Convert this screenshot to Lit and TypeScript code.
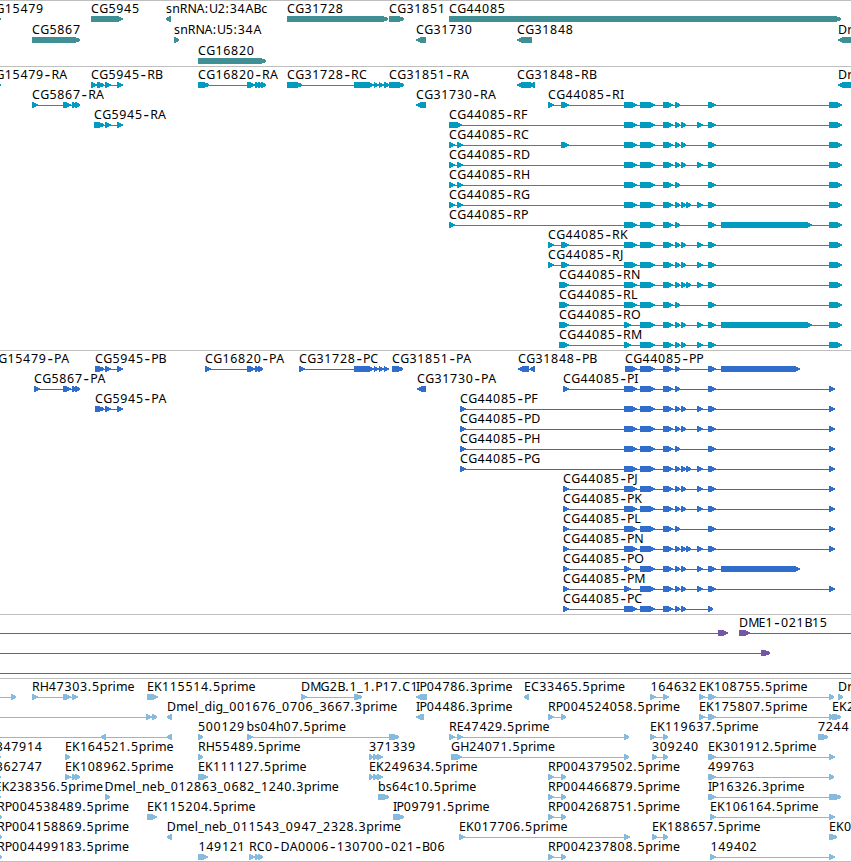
import { LitElement, html, svg, css } from "lit";
import { customElement, property } from "lit/decorators.js";

type Span = [number, number];
interface Feature {
  row: number;
  name: string;
  at: number;
  parts: Span[];
  dir?: 1 | -1;
}

const f = (row: number, name: string, at: number, parts: Span[] = [], dir: 1 | -1 = 1): Feature => ({ row, name, at, parts, dir });

/* Pen advance of each character, in pixels. */
const ADV: Record<string, number> = {
  A: 8.2, B: 7.6, C: 8.3, D: 9.2, E: 7, F: 6.8, G: 9.2, H: 9, I: 3.6, J: 3.6, K: 8, L: 6.8, M: 10.4, N: 9, O: 9.4,
  P: 7.2, R: 7.8, U: 8.8, "-": 7.6, "_": 6.1, ".": 4.2, ":": 4.2, a: 7.3, b: 7.7, c: 6.5, d: 7.7, e: 7.2, g: 7.5,
  h: 7.6, i: 3.4, l: 3.4, m: 11.6, n: 7.6, p: 7.7, r: 5, s: 6.2,
};
const adv = (c: string) => ADV[c] ?? 7.8;

/* Exons of CG44085, keyed by one letter each. */
const EXONS: Record<string, Span[]> = {
  a: [[624, 636.5]],
  A: [[624, 630.5]],
  p: [[625, 636.5]],
  b: [[640, 654.7]],
  c: [[663, 672.5]],
  d: [[675, 680.4]],
  e: [[681, 686.4]],
  f: [[686, 691.4]],
  g: [[697, 702.6]],
  h: [[708, 712.5], [710, 715.6]],
  H: [[708, 713.4]],
  X: [[721, 811.5]],
  Y: [[721, 800]],
  Z: [[829, 841.5]],
  z: [[829, 834.5]],
  "1": [[449, 454.5]],
  "2": [[457, 462.5]],
  "3": [[449, 461.5]],
  "4": [[548, 553.5]],
  "5": [[561, 568.5]],
  "6": [[559, 568.5]],
  "7": [[563, 568.5]],
  "8": [[460, 465.5]],
};
const iso = (row: number, suffix: string, keys: string): Feature => {
  const parts = [...keys].flatMap((k) => EXONS[k]);
  return f(row, "CG44085-" + suffix, parts[0][0], parts);
};

const GENES: Feature[] = [
  f(0, "CG15479", -12.7, [[-8, 1]]),
  f(0, "CG5945", 91, [[91, 122.5]]),
  f(0, "snRNA:U2:34ABc", 166, [[166, 171.2]], -1),
  f(0, "CG31728", 287, [[287, 388.3]]),
  f(0, "CG31851", 389, [[389, 404.3]]),
  f(0, "CG44085", 449, [[449, 841.3]]),
  f(1, "CG5867", 32, [[32, 80.3]]),
  f(1, "snRNA:U5:34A", 174, [[174, 179.3]]),
  f(1, "CG31730", 416, [[416, 426]], -1),
  f(1, "CG31848", 517, [[517, 532]], -1),
  f(1, "Dr", 838, [[838, 870]], -1),
  f(2, "CG16820", 198, [[198, 266.3]]),
];

const TRANSCRIPTS: Feature[] = [
  f(0, "CG15479-RA", -12.7, [[-8, 1]]),
  f(0, "CG5945-RB", 91, [[91, 96.5], [97, 104.3], [105, 110.5], [117, 123]]),
  f(0, "CG16820-RA", 198, [[198, 209.4], [247, 255], [255, 259.5], [258, 263], [261, 266.2]]),
  f(0, "CG31728-RC", 287, [[287, 302.4], [354, 374], [373.5, 379], [378.5, 384], [384, 389.3]]),
  f(0, "CG31851-RA", 389, [[389, 404.3]]),
  f(0, "CG31848-RB", 517, [[517, 530.5], [530, 535]], -1),
  f(0, "Dr", 838, [[838, 870]], -1),
  f(1, "CG5867-RA", 32, [[32, 37.5], [63, 70.5], [72, 76.5], [75, 80.4]]),
  f(1, "CG31730-RA", 416, [[416, 426]], -1),
  iso(1, "RI", "45abcdhZ"),
  f(2, "CG5945-RA", 94, [[94, 99], [96, 104.3], [105, 110.8], [117, 122.6]]),
  iso(2, "RF", "3abcdeghZ"),
  iso(3, "RC", "125abcdehZ"),
  iso(4, "RD", "12abcdeghZ"),
  iso(5, "RH", "12abcdhZ"),
  iso(6, "RG", "12abcdefghZ"),
  iso(7, "RP", "1abcdhXZ"),
  iso(8, "RK", "45abcdeghZ"),
  iso(9, "RJ", "45abcdeghZ"),
  iso(10, "RN", "6abcdefghZ"),
  iso(11, "RL", "6abcdhZ"),
  iso(12, "RO", "6AbcdeghXZ"),
  iso(13, "RM", "6AbcdeghZ"),
];

const PROTEINS: Feature[] = [
  f(0, "CG15479-PA", -10, []),
  f(0, "CG5945-PB", 95, [[95, 100], [97, 104.3], [105, 110.6], [117, 122.6]]),
  f(0, "CG16820-PA", 205, [[205, 210.8], [247, 255], [255, 259.5], [258, 263.3]]),
  f(0, "CG31728-PC", 299, [[299, 304.5], [354, 374], [373.5, 378.5], [378.5, 384], [383.5, 389]]),
  f(0, "CG31851-PA", 392, [[392, 403.3]]),
  f(0, "CG31848-PB", 518, [[518, 529.3], [530, 535]], -1),
  iso(0, "PP", "pbcdhY"),
  f(1, "CG5867-PA", 34, [[34, 39.5], [63, 70.5], [72, 76.5], [75, 80.4]]),
  f(1, "CG31730-PA", 417, [[417, 426]], -1),
  iso(1, "PI", "7abcdhz"),
  f(2, "CG5945-PA", 95, [[95, 100], [97, 104.3], [105, 110.6], [117, 122.6]]),
  iso(2, "PF", "8abcdeghz"),
  iso(3, "PD", "8abcdeghz"),
  iso(4, "PH", "8abcdhz"),
  iso(5, "PG", "8abcdefghz"),
  iso(6, "PJ", "7abcdeghz"),
  iso(7, "PK", "7abcdeghz"),
  iso(8, "PL", "7abcdhz"),
  iso(9, "PN", "7abcdefghz"),
  iso(10, "PO", "7AbcdeghY"),
  iso(11, "PM", "7Abcdeghz"),
  iso(12, "PC", "7abcdeH"),
];

const CLONES: Feature[] = [
  f(0, "", 0, [[-20, -10], [718, 727.6]]),
  f(0, "DME1-021B15", 739, [[739, 749.6], [870, 880]]),
  f(1, "", 0, [[-20, -10], [761, 770.4]]),
  f(2, "", 0, [[-20, -10], [870, 880]]),
];

const PAIR: Span[] = [[708, 712.5], [710, 715.8]];
const TRIO: Span[] = [[369, 373.5], [373, 378], [377, 383]];
const RP: Span[] = [[548, 553.5], [561, 566]];
const ESTS: Feature[] = [
  f(0, "", 0, [[-20, -10], [11, 16.3]]),
  f(0, "RH47303.5prime", 32, [[32, 37.5], [63, 71], [72, 77.5]]),
  f(0, "EK115514.5prime", 147, [[147, 157.5]]),
  f(0, "DMG2B.1_1.P17.C1", 301, [[301, 306.5], [354, 362.4]]),
  f(0, "IP04786.3prime", 416, [[416, 427]], -1),
  f(0, "EC33465.5prime", 524, [[524, 529]], -1),
  f(0, "164632", 650.5, [[650, 655.6], [663, 668.5]]),
  f(0, "EK108755.5prime", 699, [[699, 704.8], ...PAIR, [829, 834.4]]),
  f(0, "Dr", 838, [[838, 843.4]]),
  f(1, "", 0, [[-20, -10], [146, 152], [152, 157.4]]),
  f(1, "Dmel_dig_001676_0706_3667.3prime", 167, [[167, 172]], -1),
  f(1, "IP04486.3prime", 416, [[416, 424]], -1),
  f(1, "RP004524058.5prime", 548, RP),
  f(1, "EK175807.5prime", 699, [[699, 704.8], ...PAIR, [829, 834], [832, 841.4]]),
  f(1, "EK2", 832),
  f(2, "", 0, [[-20, -10], [101, 106], [167, 172]], -1),
  f(2, "500129", 198, [[198, 203.4]]),
  f(2, "bs04h07.5prime", 246.5, [[247, 252.6], [389, 399.4]]),
  f(2, "RE47429.5prime", 449, [[449, 454.5], [457, 463], [624, 629.4]]),
  f(2, "EK119637.5prime", 650, [[650, 655.6], [663, 668.4]]),
  f(2, "7244", 818, [[818, 828.4]]),
  f(3, "347914", -4.3, [[-8, 1]]),
  f(3, "EK164521.5prime", 65, [[65, 70.4]]),
  f(3, "RH55489.5prime", 198, [[198, 203.4]]),
  f(3, "371339", 369, TRIO),
  f(3, "GH24071.5prime", 451, [[451, 461.6], [624, 629.4]]),
  f(3, "309240", 652, [[652, 657], [663, 668.4]]),
  f(3, "EK301912.5prime", 708, [...PAIR, [829, 835]]),
  f(4, "362747", -4.3, [[-8, 1]]),
  f(4, "EK108962.5prime", 65, [[65, 71], [72, 76.5], [75, 80.4]]),
  f(4, "EK111127.5prime", 198, [[198, 207.5]]),
  f(4, "EK249634.5prime", 369, TRIO),
  f(4, "RP004379502.5prime", 548, RP),
  f(4, "499763", 708, [...PAIR, [829, 834.4]]),
  f(5, "EK238356.5prime", -5.5, [[-8, 1]]),
  f(5, "Dmel_neb_012863_0682_1240.3prime", 104.6, [[105, 110.4]]),
  f(5, "bs64c10.5prime", 378, [[378, 389.4]]),
  f(5, "RP004466879.5prime", 548, RP),
  f(5, "IP16326.3prime", 708, [...PAIR, [829, 841.4]]),
  f(6, "RP004538489.5prime", -3, [[-3, 2.4]]),
  f(6, "EK115204.5prime", 147, [[147, 156.6]]),
  f(6, "IP09791.5prime", 393, [[393, 404.4]]),
  f(6, "RP004268751.5prime", 548, RP),
  f(6, "EK106164.5prime", 710, [[710, 715.6], [829, 835]]),
  f(7, "RP004158869.5prime", -3, [[-3, 2.4]]),
  f(7, "Dmel_neb_011543_0947_2328.3prime", 166.8, [[167, 172]], -1),
  f(7, "EK017706.5prime", 459, [[459, 464.5], [624, 630]]),
  f(7, "EK188657.5prime", 652, [[652, 657.4], [663, 668.4]]),
  f(7, "EK0", 829, [[829, 837.4]]),
  f(8, "RP004499183.5prime", -3, [[-3, 2.4]]),
  f(8, "149121", 198.5, [[198, 207.5]]),
  f(8, "RC0-DA0006-130700-021-B06", 249, [[249, 254.5], [255, 259.5], [258, 263.3]]),
  f(8, "RP004237808.5prime", 548, RP),
  f(8, "149402", 710.5, [[710, 715.6], [829, 835]]),
];

@customElement("genome-track")
export class GenomeTrack extends LitElement {
  @property({ attribute: false }) features: Feature[] = [];
  @property({ type: Number }) pitch = 20;
  /** Offset of the first row's glyph below the track's rule. */
  @property({ type: Number }) first = 15;

  static styles = css`
    :host { display: block; border-top: 1px solid #bebebe; overflow: hidden; box-sizing: border-box; }
    .canvas { display: block; width: 100%; height: 100%; overflow: hidden; }
    .glyph { fill: currentColor; shape-rendering: crispEdges; }
    .label { fill: #000; font: 12.4px "Noto Sans", "Open Sans", sans-serif; white-space: pre; }
    .dash { font-size: 17px; }
  `;

  private arrow([s, e]: Span, y: number, dir: number) {
    const tip = Math.min(6, e - s);
    const [tail, neck, head] = dir > 0 ? [s, e - tip, e] : [e, s + tip, s];
    return svg`<polygon class="glyph" points="${tail},${y} ${neck + dir},${y} ${head},${y + 2.3} ${head},${y + 3.7} ${neck + dir},${y + 6} ${tail},${y + 6}"></polygon>`;
  }

  private label(ft: Feature, y: number) {
    let pen = ft.at;
    const runs: { text: string; xs: string[]; dash: boolean }[] = [];
    for (const c of ft.name) {
      const dash = c === "-";
      let run = runs[runs.length - 1];
      if (!run || run.dash !== dash) runs.push((run = { text: "", xs: [], dash }));
      run.text += c;
      run.xs.push((pen + (dash ? 0.9 : 0)).toFixed(1));
      pen += adv(c);
    }
    return svg`<text class="label">${runs.map((r) => svg`<tspan class=${r.dash ? "dash" : "run"} x=${r.xs.join(" ")} y=${r.dash ? y + 0.6 : y}>${r.text}</tspan>`)}</text>`;
  }

  render() {
    return html`<svg class="canvas">
      ${this.features.map((ft) => {
        const y = this.first + ft.row * this.pitch;
        const n = ft.parts.length;
        const from = n ? ft.parts[0][0] : 0;
        const to = n ? ft.parts[n - 1][1] - 1 : 0;
        return svg`
          ${n > 1 ? svg`<rect class="glyph" x=${from} y=${y + 3} width=${to - from} height="1"></rect>` : null}
          ${ft.parts.map((p) => this.arrow(p, y, ft.dir ?? 1))}
          ${ft.name ? this.label(ft, y - 3) : null}`;
      })}
    </svg>`;
  }
}

@customElement("app-root")
export class AppRoot extends LitElement {
  static styles = css`
    :host { display: flex; flex-direction: column; width: 851px; height: 862px; overflow: hidden; background: #fff; }
    .genes { height: 66px; color: #408f94; }
    .transcripts { height: 284px; color: #009bbf; }
    .proteins { height: 264px; color: #306dcd; }
    .clones { height: 64px; color: #7455a6; }
    .ests { height: 184px; color: #87bbdd; border-bottom: 1px solid #bebebe; }
  `;

  render() {
    return html`
      <genome-track class="genes" .features=${GENES} pitch="21"></genome-track>
      <genome-track class="transcripts" .features=${TRANSCRIPTS}></genome-track>
      <genome-track class="proteins" .features=${PROTEINS}></genome-track>
      <genome-track class="clones" .features=${CLONES}></genome-track>
      <genome-track class="ests" .features=${ESTS}></genome-track>
    `;
  }
}
